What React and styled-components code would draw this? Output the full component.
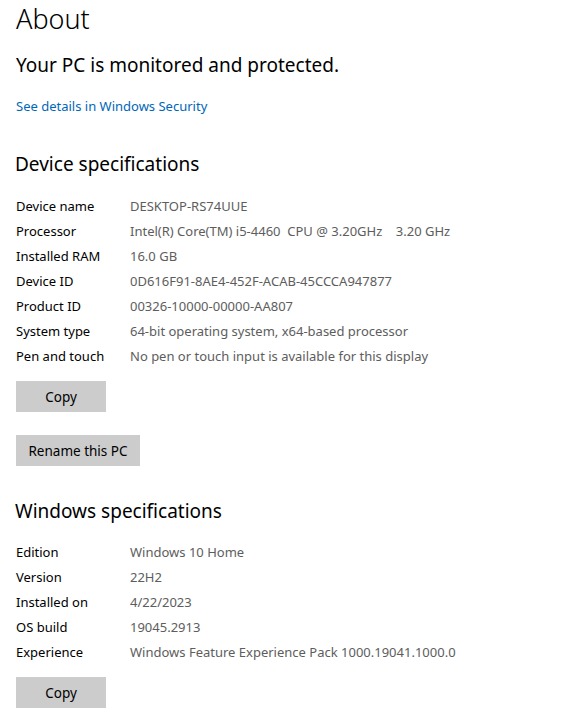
import styled, { createGlobalStyle } from 'styled-components';

const GlobalStyle = createGlobalStyle`
  html, body {
    margin: 0;
    padding: 0;
    background: #ffffff;
  }
  body {
    font-family: "Noto Sans", "Open Sans", sans-serif;
    color: #000000;
  }
`;

const deviceSpecs = [
  ['Device name', 'DESKTOP-RS74UUE'],
  ['Processor', 'Intel(R) Core(TM) i5-4460  CPU @ 3.20GHz    3.20 GHz'],
  ['Installed RAM', '16.0 GB'],
  ['Device ID', '0D616F91-8AE4-452F-ACAB-45CCCA947877'],
  ['Product ID', '00326-10000-00000-AA807'],
  ['System type', '64-bit operating system, x64-based processor'],
  ['Pen and touch', 'No pen or touch input is available for this display'],
];

const windowsSpecs = [
  ['Edition', 'Windows 10 Home'],
  ['Version', '22H2'],
  ['Installed on', '4/22/2023'],
  ['OS build', '19045.2913'],
  ['Experience', 'Windows Feature Experience Pack 1000.19041.1000.0'],
];

const App = () => {
  return (
    <Page>
      <GlobalStyle />
      <Title>About</Title>
      <Status>Your PC is monitored and protected.</Status>
      <Link href="#">See details in Windows Security</Link>

      <SectionHeading $top={34}>Device specifications</SectionHeading>
      <SpecList $top={15}>
        {deviceSpecs.map(([label, value]) => (
          <SpecRow key={label}>
            <SpecLabel>{label}</SpecLabel>
            <SpecValue>{value}</SpecValue>
          </SpecRow>
        ))}
      </SpecList>
      <ButtonStack>
        <Button $width={90}>Copy</Button>
        <Button $width={124}>Rename this PC</Button>
      </ButtonStack>

      <SectionHeading $top={31}>Windows specifications</SectionHeading>
      <SpecList $top={14}>
        {windowsSpecs.map(([label, value]) => (
          <SpecRow key={label}>
            <SpecLabel>{label}</SpecLabel>
            <SpecValue>{value}</SpecValue>
          </SpecRow>
        ))}
      </SpecList>
      <ButtonStack>
        <Button $width={90}>Copy</Button>
      </ButtonStack>
    </Page>
  );
};

const Page = styled.main`
  display: flex;
  flex-direction: column;
  align-items: flex-start;
  padding: 0 16px;
  width: 571px;
  height: 716px;
  box-sizing: border-box;
  overflow: hidden;
`;

const Title = styled.h1`
  margin: -1px 0 0;
  font-size: 27px;
  font-weight: 300;
  line-height: 40px;
  color: #000;
`;

const Status = styled.p`
  margin: 12px 0 0;
  font-size: 19px;
  font-weight: 400;
  line-height: 28px;
  color: #000;
`;

const Link = styled.a`
  margin-top: 17px;
  font-size: 13px;
  line-height: 20px;
  color: #0067b8;
  text-decoration: none;
`;

const SectionHeading = styled.h2`
  margin: ${({ $top }) => $top}px 0 0 -1px;
  font-size: 19px;
  font-weight: 400;
  line-height: 28px;
  color: #000;
`;

const SpecList = styled.div`
  display: flex;
  flex-direction: column;
  margin-top: ${({ $top }) => $top}px;
`;

const SpecRow = styled.div`
  display: grid;
  grid-template-columns: 114px auto;
  height: 25px;
  align-items: center;
  font-size: 13px;
  white-space: pre;
`;

const SpecLabel = styled.span`
  color: #000;
`;

const SpecValue = styled.span`
  color: #5d5d5d;
`;

const ButtonStack = styled.div`
  display: flex;
  flex-direction: column;
  align-items: flex-start;
  gap: 23px;
  margin-top: 13px;
`;

const Button = styled.button`
  width: ${({ $width }) => $width}px;
  height: 31px;
  border: none;
  padding: 0;
  background: #cccccc;
  font-family: inherit;
  font-size: 13.5px;
  color: #000;
`;

export default App;
